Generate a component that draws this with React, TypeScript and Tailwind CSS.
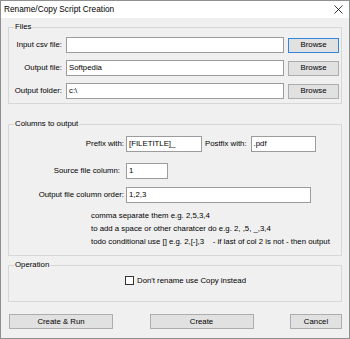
const font = { fontFamily: '"Liberation Sans", Arial, sans-serif' };

const Field = ({ value = '', width }: { value?: string; width: string }) => (
  <div
    className={`${width} h-[16px] bg-white border border-[#9c9c9c] pl-[2px] flex items-center text-[7.8px] leading-none text-black`}
  >
    {value}
  </div>
);

const Button = ({ label, width, focused = false }: { label: string; width: string; focused?: boolean }) => (
  <button
    className={`${width} h-[15px] bg-[#e1e1e1] border ${focused ? 'border-[#2f86da]' : 'border-[#adadad]'} text-[7.8px] leading-none text-black flex items-center justify-center`}
  >
    {label}
  </button>
);

const Group = ({ title, className, children }: { title: string; className: string; children: React.ReactNode }) => (
  <fieldset className={`mx-[7px] border border-[#d7d7d7] ${className}`}>
    <legend className="ml-[5px] px-[1px] text-[7.8px] leading-[10px] text-black">{title}</legend>
    {children}
  </fieldset>
);

const App = () => {
  return (
    <div className="w-[350px] h-[339px] bg-[#f0f0f0] border border-[#8f8f8f] flex flex-col" style={font}>
      {/* Title bar */}
      <div className="h-[17px] bg-white flex items-center justify-between pl-[3px] pr-[6px]">
        <span className="text-[8.3px] leading-none text-black">Rename/Copy Script Creation</span>
        <svg width="9" height="9" viewBox="0 0 9 9" className="text-[#222]">
          <path d="M0.5 0.5 L8.5 8.5 M8.5 0.5 L0.5 8.5" stroke="currentColor" strokeWidth="0.9" fill="none" />
        </svg>
      </div>

      {/* Files */}
      <Group title="Files" className="mt-[4px] pt-[5px] pb-[4px]">
        <div className="flex flex-col gap-[7px]">
          {[
            { label: 'Input csv file:', value: '', focused: true },
            { label: 'Output file:', value: 'Softpedia', focused: false },
            { label: 'Output folder:', value: 'c:\\', focused: false },
          ].map((row) => (
            <div key={row.label} className="flex items-center">
              <span className="w-[53px] text-right text-[7.8px] leading-none text-black">{row.label}</span>
              <div className="ml-[4px]">
                <Field value={row.value} width="w-[218px]" />
              </div>
              <div className="ml-[4px]">
                <Button label="Browse" width="w-[51px]" focused={row.focused} />
              </div>
            </div>
          ))}
        </div>
      </Group>

      {/* Columns to output */}
      <Group title="Columns to output" className="mt-[15px] pt-[7px] pb-[7px]">
        <div className="flex items-center">
          <span className="w-[115px] text-right text-[7.8px] leading-none text-black">Prefix with:</span>
          <div className="ml-[2px]">
            <Field value="[FILETITLE]_" width="w-[76px]" />
          </div>
          <span className="ml-[3px] text-[7.8px] leading-none text-black">Postfix with:</span>
          <div className="ml-[4px]">
            <Field value=".pdf" width="w-[65px]" />
          </div>
        </div>
        <div className="flex items-center mt-[11px]">
          <span className="w-[111px] text-right text-[7.8px] leading-none text-black">Source file column:</span>
          <div className="ml-[6px]">
            <Field value="1" width="w-[42px]" />
          </div>
        </div>
        <div className="flex items-center mt-[8px]">
          <span className="w-[115px] text-right text-[7.8px] leading-none text-black">Output file column order:</span>
          <div className="ml-[2px]">
            <Field value="1,2,3" width="w-[185px]" />
          </div>
        </div>
        <div className="pl-[82px] mt-[6px] text-[7.8px] leading-[13px] text-black whitespace-pre">
          <div>comma separate them e.g. 2,5,3,4</div>
          <div>to add a space or other charatcer do e.g. 2, ,5, _,3,4</div>
          <div>todo conditional use [] e.g. 2,[-],3    - if last of col 2 is not - then output</div>
        </div>
      </Group>

      {/* Operation */}
      <Group title="Operation" className="mt-[4px] pt-[6px] pb-[16px]">
        <div className="flex items-center pl-[116px]">
          <div className="w-[9px] h-[9px] bg-white border border-[#333]" />
          <span className="ml-[3px] text-[7.8px] leading-none text-black">Don't rename use Copy instead</span>
        </div>
      </Group>

      {/* Actions */}
      <div className="mt-[12px] pl-[8px] pr-[7px] flex justify-between">
        <Button label="Create & Run" width="w-[104px]" />
        <Button label="Create" width="w-[104px]" />
        <Button label="Cancel" width="w-[52px]" />
      </div>
    </div>
  );
};

export default App;
